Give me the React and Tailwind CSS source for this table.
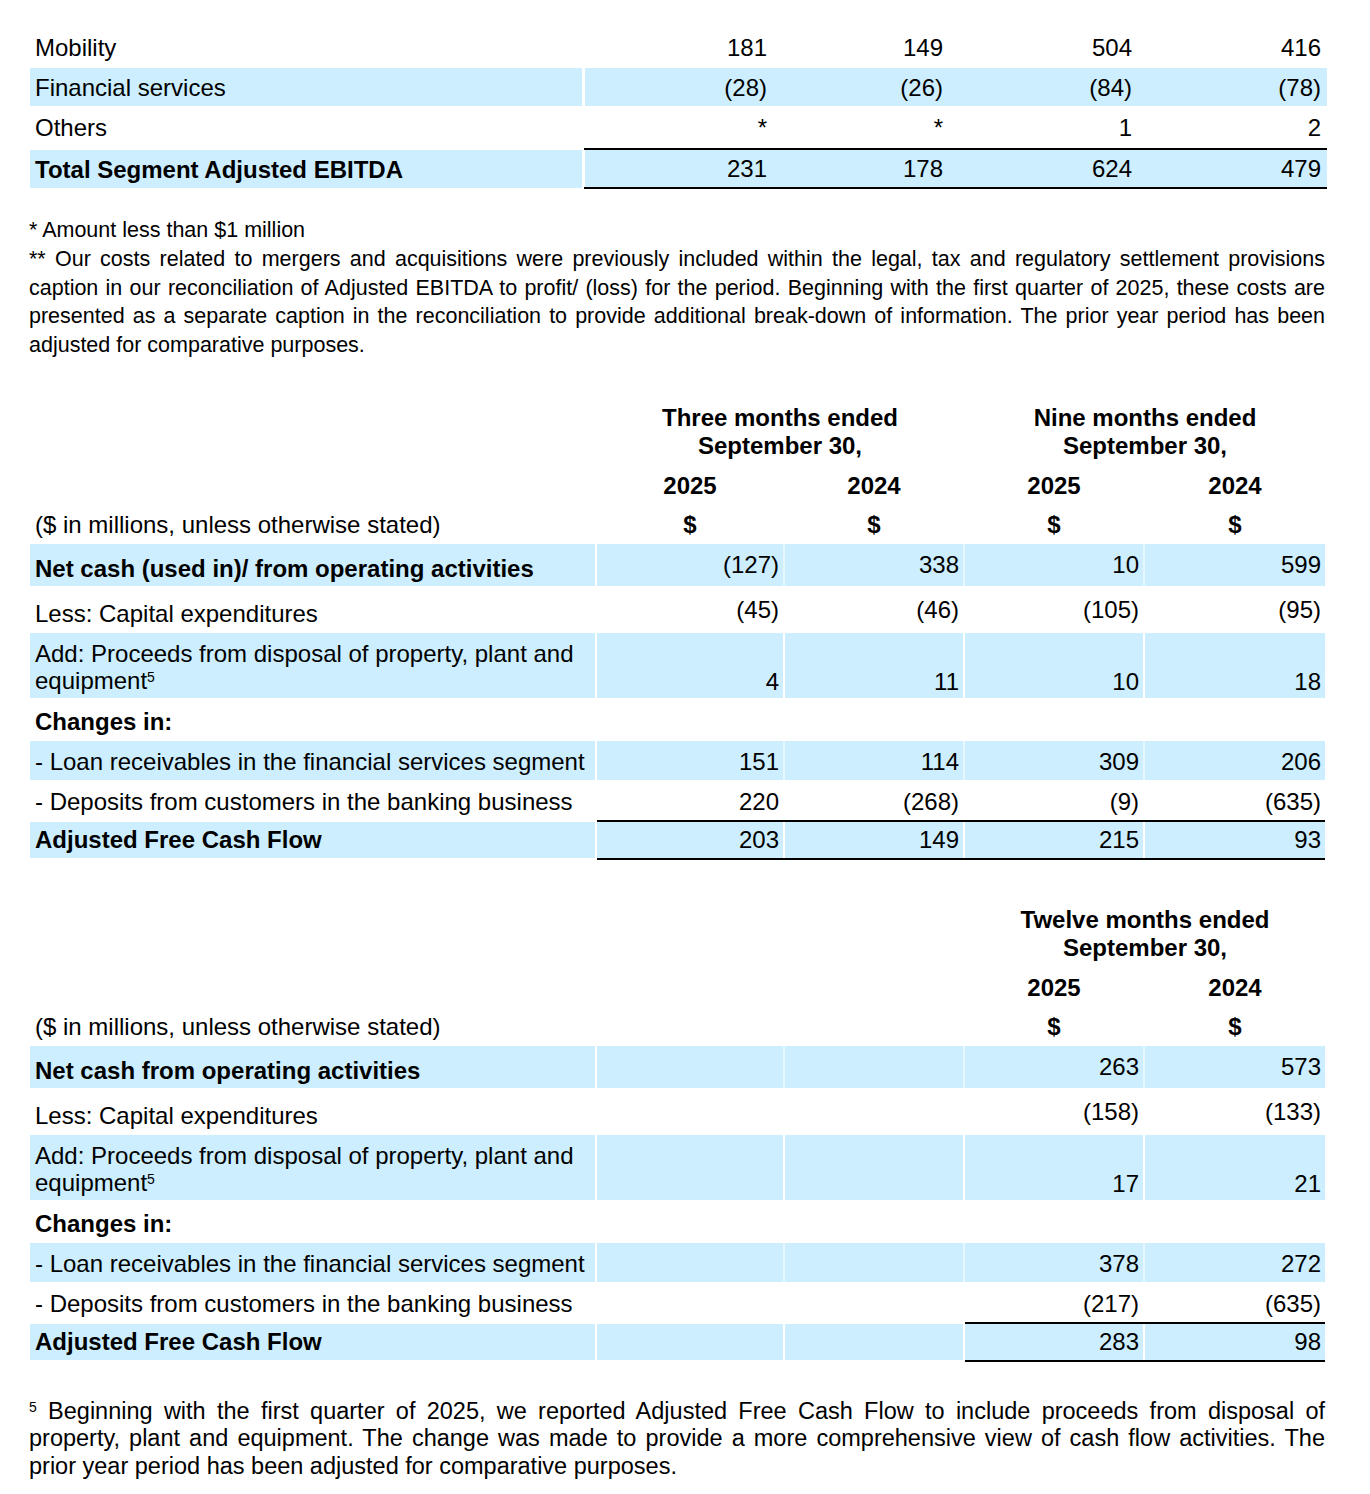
import React from "react";

const FONT = "font-['Liberation_Sans',Arial,Helvetica,sans-serif]";
const SHADE = "bg-[#cceeff]";
const COLW = ["w-[186px]", "w-[178px]", "w-[178px]", "w-[180px]"];
const TOPW = ["w-[186px]", "w-[176px]", "w-[189px]", "w-[191px]"];

const segments = [
    { label: "Mobility", vals: ["181", "149", "504", "416"] },
    { label: "Financial services", vals: ["(28)", "(26)", "(84)", "(78)"], shade: true },
    { label: "Others", vals: ["*", "*", "1", "2"] },
];

const equipment = <>Add: Proceeds from disposal of property, plant and<br />equipment<sup className="text-[14px]">5</sup></>;

const quarterRows = [
    { label: "Net cash (used in)/ from operating activities", bold: true, shade: true, faint: true, h: "h-[42px]", labelCls: "pt-[8px]", vals: ["(127)", "338", "10", "599"] },
    { label: "Less: Capital expenditures", h: "h-[47px]", labelCls: "pt-[8px]", vals: ["(45)", "(46)", "(105)", "(95)"] },
    { label: equipment, shade: true, h: "h-[65px]", labelCls: "items-start pt-[7px]", numCls: "items-end pb-[3px]", vals: ["4", "11", "10", "18"] },
    { label: "Changes in:", bold: true, h: "h-[43px]", labelCls: "pt-[5px]", vals: ["", "", "", ""] },
    { label: "- Loan receivables in the financial services segment", shade: true, faint: true, h: "h-[39px]", labelCls: "pt-[3px]", numCls: "pt-[3px]", vals: ["151", "114", "309", "206"] },
    { label: "- Deposits from customers in the banking business", h: "h-[40px]", labelCls: "pt-[4px]", numCls: "pt-[4px]", vals: ["220", "(268)", "(9)", "(635)"] },
];

const twelveRows = [
    { label: "Net cash from operating activities", bold: true, shade: true, faint: true, h: "h-[42px]", labelCls: "pt-[8px]", vals: ["", "", "263", "573"] },
    { label: "Less: Capital expenditures", h: "h-[47px]", labelCls: "pt-[8px]", vals: ["", "", "(158)", "(133)"] },
    { label: equipment, shade: true, h: "h-[65px]", labelCls: "items-start pt-[7px]", numCls: "items-end pb-[3px]", vals: ["", "", "17", "21"] },
    { label: "Changes in:", bold: true, h: "h-[43px]", labelCls: "pt-[5px]", vals: ["", "", "", ""] },
    { label: "- Loan receivables in the financial services segment", shade: true, faint: true, h: "h-[39px]", labelCls: "pt-[3px]", numCls: "pt-[3px]", vals: ["", "", "378", "272"] },
    { label: "- Deposits from customers in the banking business", h: "h-[40px]", labelCls: "pt-[4px]", numCls: "pt-[4px]", vals: ["", "", "(217)", "(635)"] },
];

function CashRow({ r }) {
    const bg = r.shade ? SHADE : "";
    return (
        <div className={`flex ${r.h}`}>
            <div className={`w-[565px] flex items-center pl-[5px] ${bg} ${r.bold ? "font-bold" : ""} ${r.labelCls || ""}`}>
                <div>{r.label}</div>
            </div>
            <div className="w-[2px]" />
            <div className={`flex gap-[2px] ${r.faint ? "bg-[#e6f7ff]" : ""}`}>
                {r.vals.map((v, i) => (
                    <div key={i} className={`${COLW[i]} ${bg} flex items-center justify-end pr-[4px] ${r.numCls || ""}`}>
                        {v}
                    </div>
                ))}
            </div>
        </div>
    );
}

function TotalRow({ vals, borderFrom }) {
    return (
        <div className="flex h-[40px]">
            <div className={`w-[565px] my-[2px] flex items-center pl-[5px] font-bold ${SHADE}`}>Adjusted Free Cash Flow</div>
            <div className="w-[2px]" />
            <div className="flex gap-[2px]">
                {borderFrom > 0 && vals.slice(0, borderFrom).map((v, i) => (
                    <div key={i} className={`${COLW[i]} my-[2px] ${SHADE} flex items-center justify-end pr-[4px]`}>{v}</div>
                ))}
                <div className="flex gap-[2px] border-y-2 border-black">
                    {vals.slice(borderFrom).map((v, i) => (
                        <div key={i} className={`${COLW[i + borderFrom]} ${SHADE} flex items-center justify-end pr-[4px]`}>{v}</div>
                    ))}
                </div>
            </div>
        </div>
    );
}

function Spacer() {
    return <><div className="w-[565px]" /><div className="w-[2px]" /></>;
}

export default function App() {
    return (
        <div className={`w-[1370px] min-h-[1494px] bg-white text-black ${FONT} text-[24px] leading-[27px] pt-[28px]`}>
            {/* Segment adjusted EBITDA tail */}
            <div className="pl-[30px]">
                {segments.map((s) => (
                    <div key={s.label} className="flex h-[38px] mb-[2px] last:mb-[1px]">
                        <div className={`w-[552px] flex items-center pl-[5px] ${s.shade ? SHADE : ""}`}>{s.label}</div>
                        <div className="w-[3px]" />
                        <div className="flex">
                            {s.vals.map((v, i) => (
                                <div key={i} className={`${TOPW[i]} ${s.shade ? SHADE : ""} flex items-center justify-end ${i === 3 ? "pr-[6px]" : "pr-[4px]"}`}>{v}</div>
                            ))}
                        </div>
                    </div>
                ))}
                <div className="flex h-[41px]">
                    <div className={`w-[552px] mt-[2px] mb-[1px] flex items-center pl-[5px] font-bold ${SHADE}`}>Total Segment Adjusted EBITDA</div>
                    <div className="w-[2px]" />
                    <div className="flex border-y-2 border-black pl-[1px]">
                        {["231", "178", "624", "479"].map((v, i) => (
                            <div key={i} className={`${TOPW[i]} ${SHADE} flex items-center justify-end ${i === 3 ? "pr-[6px]" : "pr-[4px]"}`}>{v}</div>
                        ))}
                    </div>
                </div>
            </div>

            {/* Footnotes */}
            <div className="ml-[29px] w-[1296px] mt-[27px] text-[21.5px] leading-[28.75px]">
                <div>* Amount less than $1 million</div>
                <div className="text-justify [text-align-last:justify]">** Our costs related to mergers and acquisitions were previously included within the legal, tax and regulatory settlement provisions</div>
                <div className="text-justify [text-align-last:justify]">caption in our reconciliation of Adjusted EBITDA to profit/ (loss) for the period. Beginning with the first quarter of 2025, these costs are</div>
                <div className="text-justify [text-align-last:justify]">presented as a separate caption in the reconciliation to provide additional break-down of information. The prior year period has been</div>
                <div>adjusted for comparative purposes.</div>
            </div>

            {/* Quarter / nine months */}
            <div className="pl-[30px] mt-[41px]">
                <div className="flex h-[62px] font-bold leading-[28px]">
                    <Spacer />
                    <div className="w-[366px] flex items-center justify-center text-center">Three months ended<br />September 30,</div>
                    <div className="w-[2px]" />
                    <div className="w-[360px] flex items-center justify-center text-center">Nine months ended<br />September 30,</div>
                </div>
                <div className="flex h-[42px] font-bold">
                    <Spacer />
                    <div className="flex gap-[2px]">
                        {["2025", "2024", "2025", "2024"].map((y, i) => (
                            <div key={i} className={`${COLW[i]} flex items-center justify-center pt-[3px]`}>{y}</div>
                        ))}
                    </div>
                </div>
                <div className="flex h-[39px]">
                    <div className="w-[565px] flex items-center pl-[5px]">($ in millions, unless otherwise stated)</div>
                    <div className="w-[2px]" />
                    <div className="flex gap-[2px] font-bold">
                        {COLW.map((w, i) => (
                            <div key={i} className={`${w} flex items-center justify-center`}>$</div>
                        ))}
                    </div>
                </div>
                {quarterRows.map((r, i) => <CashRow key={i} r={r} />)}
                <TotalRow vals={["203", "149", "215", "93"]} borderFrom={0} />
            </div>

            {/* Twelve months */}
            <div className="pl-[30px] mt-[43px]">
                <div className="flex h-[62px] font-bold leading-[28px]">
                    <Spacer />
                    <div className="w-[366px]" />
                    <div className="w-[2px]" />
                    <div className="w-[360px] flex items-center justify-center text-center">Twelve months ended<br />September 30,</div>
                </div>
                <div className="flex h-[42px] font-bold">
                    <Spacer />
                    <div className="flex gap-[2px]">
                        {["", "", "2025", "2024"].map((y, i) => (
                            <div key={i} className={`${COLW[i]} flex items-center justify-center pt-[3px]`}>{y}</div>
                        ))}
                    </div>
                </div>
                <div className="flex h-[39px]">
                    <div className="w-[565px] flex items-center pl-[5px]">($ in millions, unless otherwise stated)</div>
                    <div className="w-[2px]" />
                    <div className="flex gap-[2px] font-bold">
                        {["", "", "$", "$"].map((d, i) => (
                            <div key={i} className={`${COLW[i]} flex items-center justify-center`}>{d}</div>
                        ))}
                    </div>
                </div>
                {twelveRows.map((r, i) => <CashRow key={i} r={r} />)}
                <TotalRow vals={["", "", "283", "98"]} borderFrom={2} />
            </div>

            {/* Footnote 5 */}
            <div className="ml-[29px] w-[1296px] mt-[36px] text-[23.5px] leading-[27.5px]">
                <div className="text-justify [text-align-last:justify]"><sup className="text-[14px]">5</sup> Beginning with the first quarter of 2025, we reported Adjusted Free Cash Flow to include proceeds from disposal of</div>
                <div className="text-justify [text-align-last:justify]">property, plant and equipment. The change was made to provide a more comprehensive view of cash flow activities. The</div>
                <div>prior year period has been adjusted for comparative purposes.</div>
            </div>
        </div>
    );
}
